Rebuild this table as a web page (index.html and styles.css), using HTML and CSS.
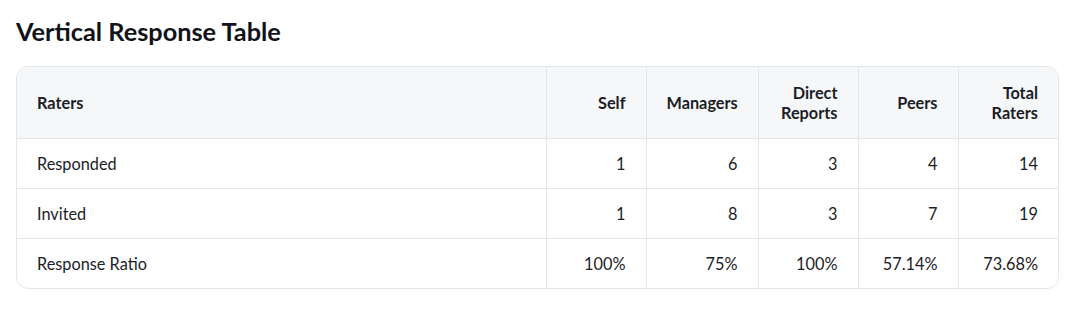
FILE: index.html
```html
<!DOCTYPE html>
<html>
<head>
<meta charset="utf-8">
<link rel="stylesheet" href="styles.css">
</head>
<body>
<div class="page">
  <h1 class="title">Vertical Response Table</h1>
  <div class="card">
    <table class="tbl">
      <colgroup>
        <col class="c-label">
        <col class="c-100">
        <col class="c-112">
        <col class="c-100">
        <col class="c-100">
        <col class="c-100">
      </colgroup>
      <thead>
        <tr>
          <th class="left">Raters</th>
          <th>Self</th>
          <th>Managers</th>
          <th>Direct Reports</th>
          <th>Peers</th>
          <th>Total Raters</th>
        </tr>
      </thead>
      <tbody>
        <tr><td class="left">Responded</td><td>1</td><td>6</td><td>3</td><td>4</td><td>14</td></tr>
        <tr><td class="left">Invited</td><td>1</td><td>8</td><td>3</td><td>7</td><td>19</td></tr>
        <tr><td class="left">Response Ratio</td><td>100%</td><td>75%</td><td>100%</td><td>57.14%</td><td>73.68%</td></tr>
      </tbody>
    </table>
  </div>
</div>
</body>
</html>
```
FILE: styles.css
```css
html, body { margin: 0; padding: 0; background: #fff; }
body { font-family: Lato, "Noto Sans", sans-serif; color: #1c1d26; }
.page { padding: 16px 22px 0 16px; }
.title { margin: 0 0 20px 0; font-size: 25.3px; font-weight: 700; line-height: 30px; color: #111218; }
.card { border: 1px solid #e3e6ea; border-radius: 12px; overflow: hidden; }
.tbl { width: 100%; border-collapse: collapse; table-layout: fixed; font-size: 16.3px; }
.c-100 { width: 100px; }
.c-112 { width: 112px; }
.tbl th, .tbl td { padding: 0 20px; text-align: right; border-left: 1px solid #e3e6ea; }
.tbl th:first-child, .tbl td:first-child { border-left: none; }
.tbl th { background: #f6f7f9; height: 71px; font-weight: 700; line-height: 20px; }
.tbl td { height: 49px; border-top: 1px solid #e3e6ea; }
.tbl .left { text-align: left; }
```
